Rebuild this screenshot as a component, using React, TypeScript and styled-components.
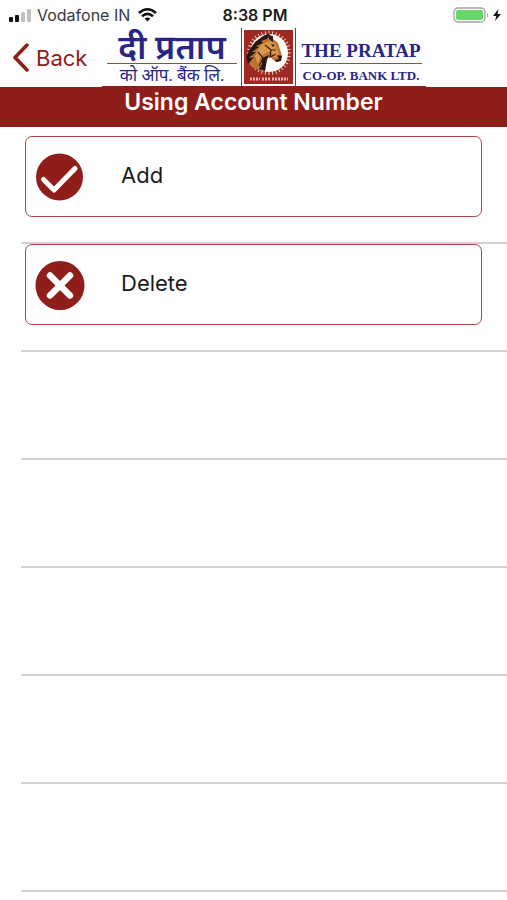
import React from "react";
import styled, { createGlobalStyle } from "styled-components";

const RED = "#8f1d1a";
const NAVY = "#2a2585";

const GlobalStyle = createGlobalStyle`
  * { box-sizing: border-box; }
  body {
    margin: 0;
    background: #fdfdfd;
    color: #1c1c1e;
    font-family: Inter, "Noto Sans", sans-serif;
  }
`;

const Screen = styled.div`
  min-height: 100vh;
  overflow-x: hidden;
`;

const StatusBar = styled.div`
  display: grid;
  grid-template-columns: 1fr auto 1fr;
  align-items: center;
  height: 28px;
  padding: 2px 6px 0 9px;
  font-size: 16px;
  line-height: 20px;
`;

const Carrier = styled.div`
  display: flex;
  align-items: center;
  gap: 5px;
  color: #3a3a3c;
  white-space: nowrap;
`;

const WifiIcon = styled.svg`
  margin-left: 3px;
`;

const Clock = styled.time`
  font-weight: 600;
`;

const Power = styled.div`
  display: flex;
  align-items: center;
  justify-content: flex-end;
  gap: 4px;
`;

const NavBar = styled.header`
  display: flex;
  align-items: flex-start;
  height: 59px;
  padding-left: 12px;
`;

const BackButton = styled.button`
  display: flex;
  align-items: center;
  gap: 6px;
  width: 90px;
  height: 59px;
  padding: 0;
  border: 0;
  background: none;
  color: ${RED};
  font: 400 22px/28px Inter, sans-serif;
`;

const Logo = styled.div`
  display: flex;
  width: 324px;
  height: 59px;
  border-bottom: 1px solid ${RED};
`;

const LogoSide = styled.div<{ $width: number; $inset: number }>`
  display: flex;
  flex-direction: column;
  align-items: center;
  width: ${(p) => p.$width}px;
  padding: 4px 4px 0 ${(p) => p.$inset}px;
  color: ${NAVY};
  white-space: nowrap;
`;

const LogoTitle = styled.div<{ $size: number; $line: number }>`
  display: flex;
  justify-content: center;
  width: 100%;
  height: 32px;
  border-bottom: 1px solid #c0392f;
  font: 600 ${(p) => p.$size}px/${(p) => p.$line}px "Liberation Serif", "Noto Sans Devanagari", "Noto Sans", serif;
`;

const LogoSubtitle = styled.div<{ $size: number; $weight: number }>`
  font: ${(p) => p.$weight} ${(p) => p.$size}px/24px "Liberation Serif", "Noto Sans Devanagari", "Noto Sans", serif;
`;

const Emblem = styled.div`
  width: 55px;
  height: 58px;
  padding: 2px;
  border-left: 1px solid #a3262c;
  border-right: 1px solid #a3262c;
`;

const TitleBar = styled.div`
  height: 40px;
  background: ${RED};
  text-align: center;
`;

const Title = styled.h1`
  margin: 0;
  color: #fff;
  font-size: 23px;
  font-weight: 600;
  line-height: 30px;
`;

const List = styled.ul`
  margin: 0;
  padding: 9px 0 0 21px;
  list-style: none;
`;

const Row = styled.li`
  height: 108px;
  padding: 0 25px 0 4px;
  border-bottom: 2px solid #d3d3d4;
`;

const Card = styled.button`
  display: grid;
  grid-template-columns: 50px 1fr;
  column-gap: 36px;
  align-items: center;
  width: 100%;
  height: 81px;
  padding: 0 9px;
  border: 1px solid #a94845;
  border-radius: 7px;
  background: #fefefe;
  color: #1c1c1e;
  font: 400 22px/28px Inter, sans-serif;
  text-align: left;
`;

const Label = styled.span`
  padding-bottom: 4px;
`;

function Signal() {
  return (
    <svg width="23" height="13" viewBox="0 0 23 13" aria-hidden="true">
      <rect x="0" y="8" width="4" height="5" rx="1" fill="#111" />
      <rect x="6" y="6" width="4" height="7" rx="1" fill="#111" />
      <rect x="12" y="3" width="4" height="10" rx="1" fill="#c2c2c4" />
      <rect x="18" y="0" width="4" height="13" rx="1" fill="#c2c2c4" />
    </svg>
  );
}

function Wifi() {
  return (
    <WifiIcon width="19" height="14" viewBox="0 0 19 14" fill="none" stroke="#111" strokeWidth="2.5" aria-hidden="true">
      <path d="M1 5Q9.500-2.400 18 5" />
      <path d="M4 8.300Q9.500 3.400 15 8.300" />
      <path d="M6.700 10.600Q9.500 8.200 12.300 10.600L9.500 13.500Z" fill="#111" stroke="none" />
    </WifiIcon>
  );
}

function Battery() {
  return (
    <svg width="36" height="16" viewBox="0 0 36 16" aria-hidden="true">
      <rect x="1" y="1" width="31" height="14" rx="4" fill="#fff" stroke="#a2a2a4" strokeWidth="1.300" />
      <rect x="3" y="3" width="27" height="10" rx="2" fill="#68d568" />
      <path d="M34 5.500Q36 8 34 10.500Z" fill="#a2a2a4" />
    </svg>
  );
}

function Bolt() {
  return (
    <svg width="8" height="12" viewBox="0 0 8 12" aria-hidden="true">
      <path d="M5.500 0L0 7H3.300L2 12L8 5H4.500Z" fill="#111" />
    </svg>
  );
}

function Horse() {
  const rays = Array.from({ length: 36 }, (_, i) => i * 10);
  return (
    <svg width="49" height="54" viewBox="0 0 49 54" role="img" aria-label="Horse emblem">
      <rect width="49" height="54" fill="#a02822" />
      <g stroke="#f0cfc8" strokeWidth="1">
        {rays.map((a) => (
          <path key={a} d="M25 1V5" transform={`rotate(${a} 25 23)`} />
        ))}
      </g>
      <circle cx="25" cy="23" r="19" fill="#fffdfa" />
      <path d="M22 7L26 4L28 8L34 13L38 26L36 31L32 32L26 27L22 29L21 41Q10 40 5 34L8 24Q11 13 22 7Z" fill="#bd742f" />
      <path d="M25 11L31 13L35 25L31 28L26 21L17 26L14 34L11 26L17 15Z" fill="#dc9650" />
      <path d="M26 3L23 9L17 11L19 13L12 16L15 17L8 22L12 22L5 28L10 27L4 34L2 27L6 19L11 12L19 6Z" fill="#251611" />
      <path d="M24 5L29 6L29 12L25 9ZM27 14L31 15L29 17ZM33 25L38 26L37 31L32 32L31 30L35 29ZM18 28L25 25L23 30L21 41L15 39L18 34Z" fill="#2c1912" />
      <path d="M21 15L27 20L32 20M27 20L26 27L32 24M14 22L19 28L15 36" fill="none" stroke="#3a2013" strokeWidth="1.200" />
      <path d="M6 49H16M18 49H26M28 49H44" stroke="#e9b9b1" strokeWidth="3" strokeDasharray="2 1" />
    </svg>
  );
}

function CheckMark() {
  return (
    <svg width="50" height="50" viewBox="0 0 50 50" aria-hidden="true">
      <circle cx="24.500" cy="25" r="23.500" fill={RED} />
      <path d="M8.500 27.500L19 38L40 16.500" fill="none" stroke="#fff" strokeWidth="5" strokeLinecap="round" strokeLinejoin="round" />
    </svg>
  );
}

function CrossMark() {
  return (
    <svg width="50" height="50" viewBox="0 0 50 50" aria-hidden="true">
      <circle cx="25" cy="25.500" r="24.500" fill={RED} />
      <path d="M15 15.500L35 35.500M35 15.500L15 35.500" fill="none" stroke="#fff" strokeWidth="6.500" strokeLinecap="round" />
    </svg>
  );
}

const actions = [
  { label: "Add", icon: <CheckMark /> },
  { label: "Delete", icon: <CrossMark /> },
];

const emptyRows = [1, 2, 3, 4, 5];

export default function App() {
  return (
    <Screen>
      <GlobalStyle />
      <StatusBar>
        <Carrier>
          <Signal />
          Vodafone IN
          <Wifi />
        </Carrier>
        <Clock>8:38 PM</Clock>
        <Power>
          <Battery />
          <Bolt />
        </Power>
      </StatusBar>
      <NavBar>
        <BackButton type="button">
          <svg width="18" height="29" viewBox="0 0 18 29" fill="none" stroke={RED} strokeWidth="3.500" strokeLinecap="round" strokeLinejoin="round" aria-hidden="true">
            <path d="M15 2L3 14.500L15 27" />
          </svg>
          Back
        </BackButton>
        <Logo>
          <LogoSide $width={139} $inset={5}>
            <LogoTitle $size={34} $line={32} lang="hi">दी प्रताप</LogoTitle>
            <LogoSubtitle $size={17} $weight={400} lang="hi">को ऑप. बैंक लि.</LogoSubtitle>
          </LogoSide>
          <Emblem>
            <Horse />
          </Emblem>
          <LogoSide $width={130} $inset={4}>
            <LogoTitle $size={19} $line={38}>THE PRATAP</LogoTitle>
            <LogoSubtitle $size={13} $weight={700}>CO-OP. BANK LTD.</LogoSubtitle>
          </LogoSide>
        </Logo>
      </NavBar>
      <TitleBar>
        <Title>Using Account Number</Title>
      </TitleBar>
      <List>
        {actions.map((a) => (
          <Row key={a.label}>
            <Card type="button">
              {a.icon}
              <Label>{a.label}</Label>
            </Card>
          </Row>
        ))}
        {emptyRows.map((n) => (
          <Row key={n} aria-hidden="true" />
        ))}
      </List>
    </Screen>
  );
}
